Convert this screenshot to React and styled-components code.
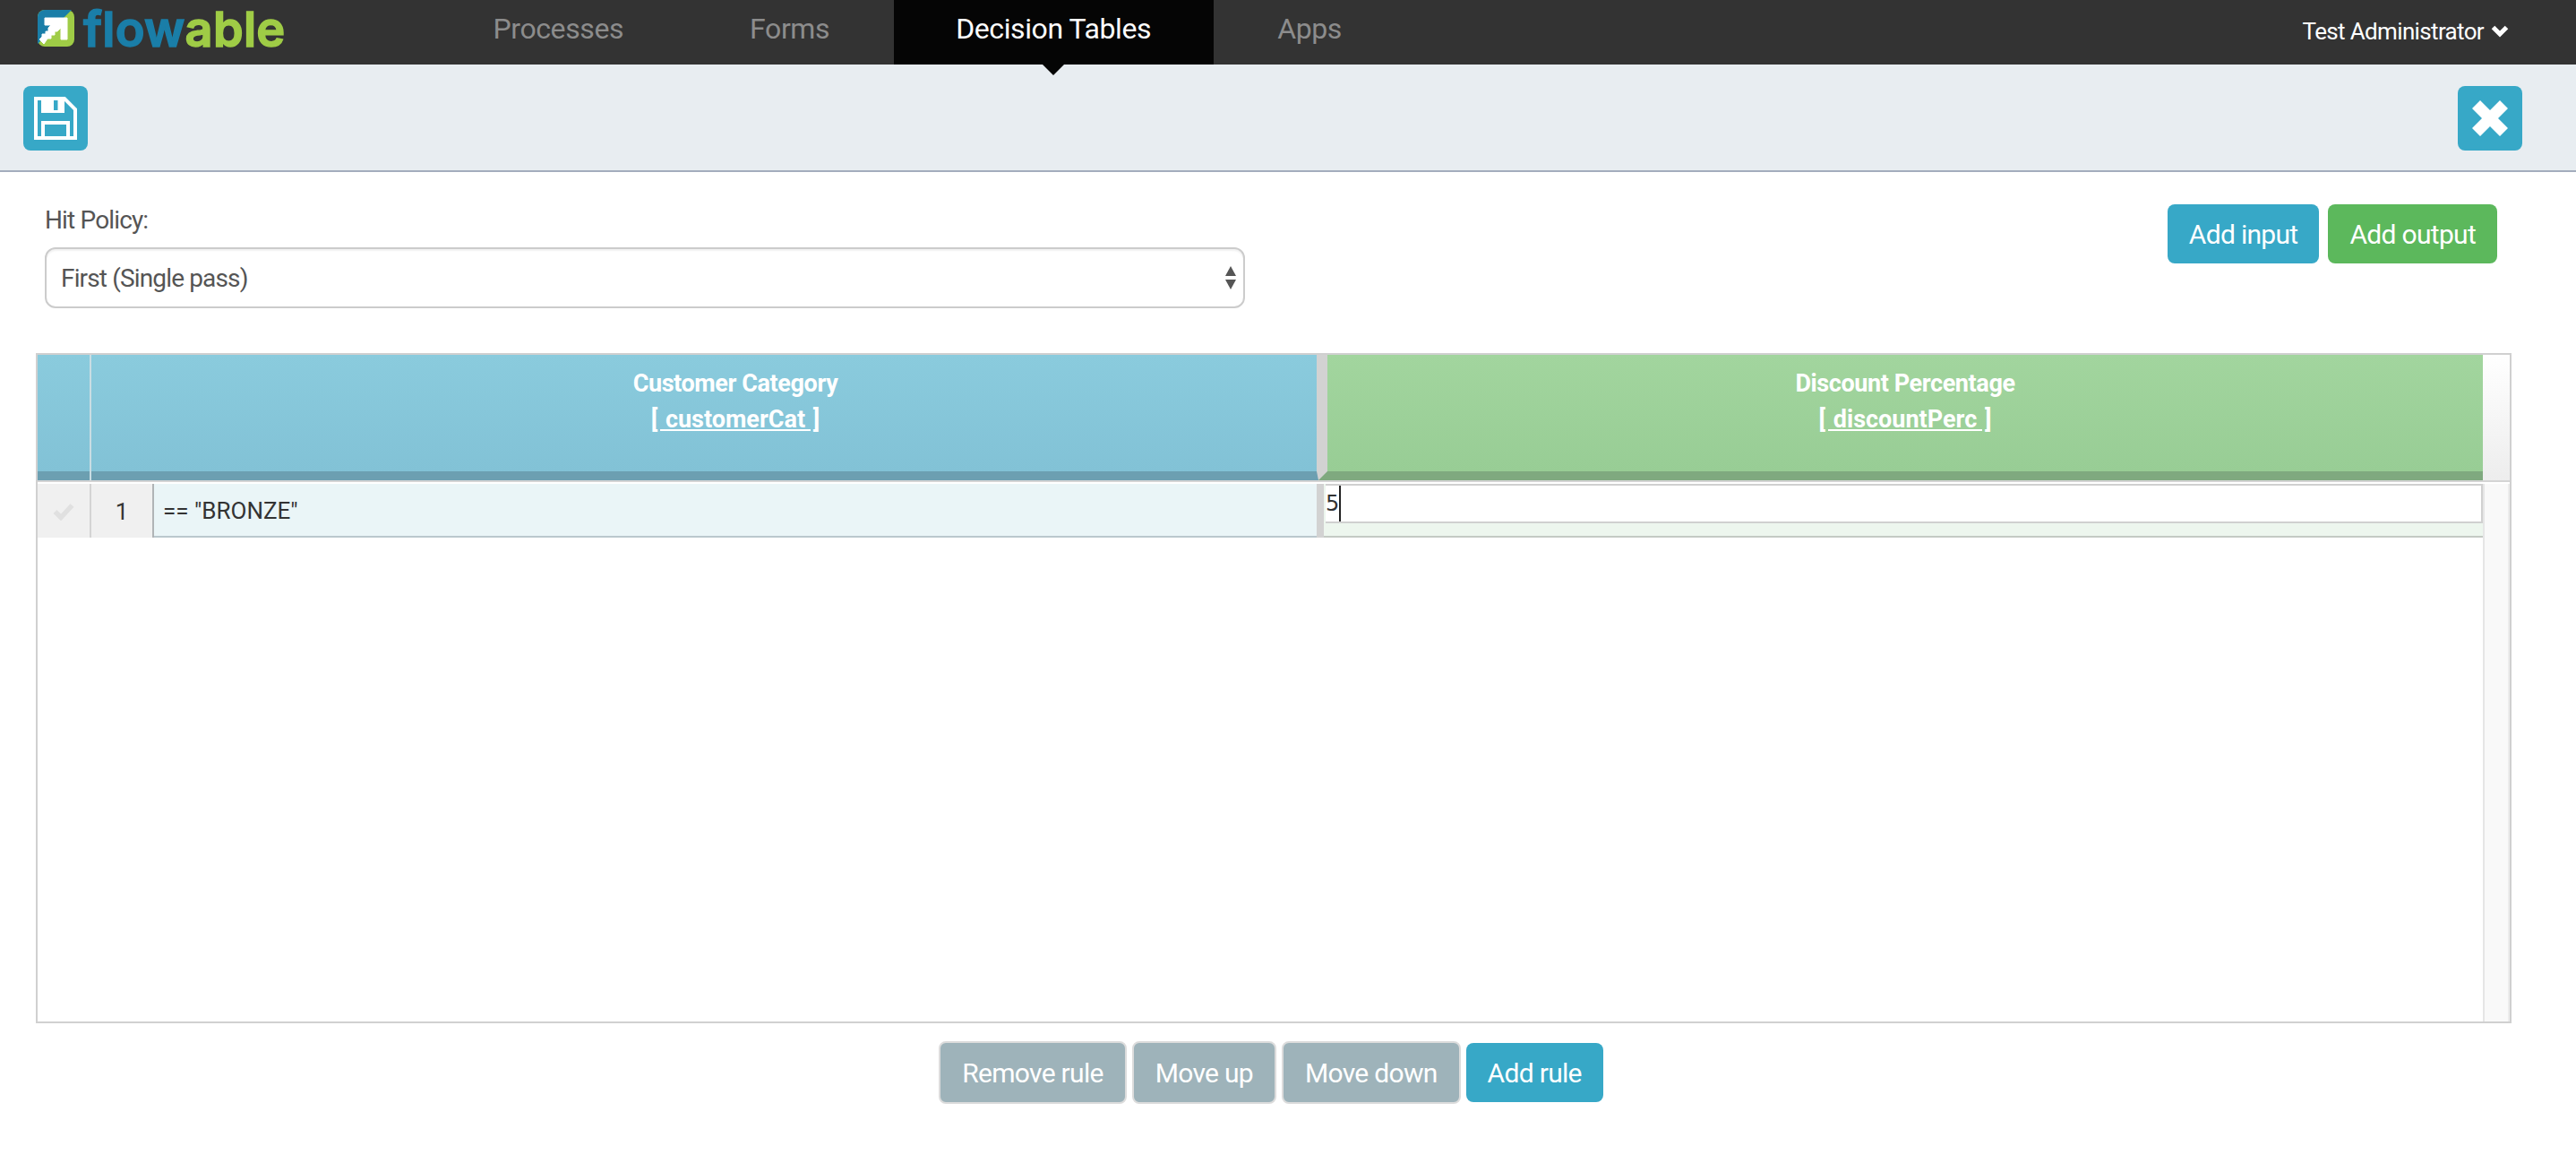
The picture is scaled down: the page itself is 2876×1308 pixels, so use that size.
import styled, { createGlobalStyle } from "styled-components";

const GlobalStyle = createGlobalStyle`
    html, body {
        margin: 0;
        padding: 0;
        background: #fff;
        overflow: hidden;
    }
    body {
        font-family: Roboto, "Liberation Sans", sans-serif;
        color: #333;
    }
    * { box-sizing: border-box; }
`

const Page = styled.div`
    width: 2876px;
    height: 1308px;
    display: flex;
    flex-direction: column;
`

const Navbar = styled.nav`
    height: 72px;
    flex: none;
    background: #333;
    display: flex;
    align-items: stretch;
`

const Brand = styled.div`
    width: 481px;
    padding: 11px 0 0 42px;
    display: flex;
    gap: 10px;
`

const Wordmark = styled.div`
    font-family: Inter, sans-serif;
    font-weight: 600;
    font-size: 54px;
    line-height: 41px;
    height: 41px;
    letter-spacing: 0.3px;
    -webkit-text-stroke: 1.5px currentColor;
    color: #1a7ea8;
    white-space: nowrap;
    padding-top: 1px;
    span { color: #9fcc46; }
`

const NavList = styled.ul`
    list-style: none;
    margin: 0;
    padding: 0;
    display: flex;
    gap: 2px;
`

const NavItem = styled.li`
    position: relative;
    padding: 0 69.5px;
    font-size: 32px;
    line-height: 64px;
    letter-spacing: -0.4px;
    color: ${props => props.$active ? "#fff" : "#8c8c8c"};
    background: ${props => props.$active ? "#050505" : "transparent"};
    ${props => props.$active && `
        &::after {
            content: "";
            position: absolute;
            left: 50%;
            top: 100%;
            margin-left: -12px;
            border-left: 12px solid transparent;
            border-right: 12px solid transparent;
            border-top: 12px solid #050505;
            z-index: 2;
        }
    `}
`

const UserMenu = styled.div`
    margin-left: auto;
    padding: 0 75px 3px 0;
    display: flex;
    align-items: center;
    gap: 8px;
    color: #fff;
    font-size: 26px;
    letter-spacing: -0.65px;
`

const Toolbar = styled.div`
    height: 120px;
    flex: none;
    background: #e8edf1;
    border-bottom: 2px solid #a4adbd;
    padding: 24px 60px 0 26px;
    display: flex;
    justify-content: space-between;
    align-items: flex-start;
`

const IconButton = styled.button`
    width: 72px;
    height: 72px;
    padding: 0;
    border: 0;
    border-radius: 8px;
    background: #37a8c7;
    display: grid;
    place-items: center;
`

const PolicyRow = styled.div`
    padding: 36px 88px 0 50px;
    display: flex;
    justify-content: space-between;
    align-items: flex-start;
`

const PolicyField = styled.div`
    width: 1340px;
    margin-top: -4px;
`

const FieldLabel = styled.label`
    display: block;
    margin-bottom: 8px;
    font-size: 28px;
    line-height: 44px;
    color: #555;
    letter-spacing: -0.85px;
`

const SelectWrap = styled.div`
    position: relative;
`

const Select = styled.select`
    display: block;
    width: 100%;
    height: 68px;
    padding: 0 16px;
    appearance: none;
    background: #fff;
    border: 2px solid #ccc;
    border-radius: 12px;
    box-shadow: inset 0 2px 2px rgba(0, 0, 0, 0.06);
    font-family: inherit;
    font-size: 28px;
    letter-spacing: -0.85px;
    color: #555;
`

const SelectArrows = styled.svg`
    position: absolute;
    right: 9px;
    top: 21px;
    pointer-events: none;
`

const ActionGroup = styled.div`
    display: flex;
    gap: 10px;
`

const ActionButton = styled.button`
    height: ${props => props.$muted ? "70px" : "66px"};
    padding: 0 24px;
    border: ${props => props.$muted ? "2px solid #dcdcdc" : "0"};
    border-radius: 8px;
    background: ${props => props.$variant === "green" ? "#5cb85c" : props.$muted ? "#9eb3ba" : "#37a8c7"};
    color: #fff;
    font-family: inherit;
    font-size: 30px;
    letter-spacing: -0.7px;
    white-space: nowrap;
`

const Table = styled.div`
    margin: 50px 0 0 40px;
    width: 2764px;
    height: 748px;
    flex: none;
    border: 2px solid #d0d0d0;
    display: flex;
    flex-direction: column;
`

const HeadRow = styled.div`
    height: 142px;
    flex: none;
    display: flex;
    border-bottom: 2px solid #d4d4d4;
`

const HeadCell = styled.div`
    position: relative;
    width: ${props => props.$width}px;
    flex: none;
    padding-left: ${props => props.$inset || 0}px;
    padding-top: 12px;
    border-bottom: 10px solid ${props => props.$kind === "input" ? "#6c9fb1" : "#7fa97f"};
    background: ${props => props.$kind === "input"
        ? "linear-gradient(#8acbdd, #82c2d6)"
        : "linear-gradient(#a2d59e, #98cd95)"};
    color: #fff;
    text-align: center;
    font-weight: 700;
    font-size: 27px;
    line-height: 40px;
    letter-spacing: -0.4px;
    ${props => props.$inset && `
        &::before {
            content: "";
            position: absolute;
            left: 58px;
            top: 0;
            bottom: -10px;
            width: 2px;
            background: #c9dde3;
        }
    `}
`

const VariableLink = styled.a`
    display: block;
    text-decoration: underline;
    letter-spacing: 0;
    word-spacing: 2px;
    color: #fff;
`

const HeadDivider = styled.div`
    position: relative;
    width: 12px;
    flex: none;
    background: #d2d2d2;
    &::before, &::after {
        content: "";
        position: absolute;
        left: 0;
        right: 0;
        bottom: 0;
        height: 10px;
    }
    &::before {
        background: #6c9fb1;
        clip-path: polygon(0 0, 2px 100%, 0 100%);
    }
    &::after {
        background: #7fa97f;
        clip-path: polygon(100% 0, 100% 100%, 2px 100%);
    }
`

const HeadCorner = styled.div`
    flex: 1;
    background: linear-gradient(#fff, #ededed);
`

const Body = styled.div`
    flex: 1;
    display: flex;
    padding-top: 2px;
`

const Rows = styled.div`
    width: 2730px;
    flex: none;
`

const Row = styled.div`
    height: 60px;
    display: flex;
`

const GutterCell = styled.div`
    width: ${props => props.$width}px;
    flex: none;
    display: grid;
    place-items: center;
    padding-top: 2px;
    background: #f0f0f0;
    border-right: 2px solid ${props => props.$dark ? "#b0b4b6" : "#d4d4d4"};
    font-size: 26px;
    color: #333;
`

const ExpressionCell = styled.div`
    width: 1298px;
    flex: none;
    padding: 0 0 0 10px;
    background: #eaf5f7;
    border-bottom: 2px solid #bac8cd;
    font-size: 26px;
    line-height: 61px;
    color: #333;
`

const CellDivider = styled.div`
    width: 8px;
    flex: none;
    background: #d2d2d2;
`

const OutputCell = styled.div`
    flex: 1;
    background: #edf6ee;
    border-bottom: 2px solid #c4cac4;
    display: flex;
    flex-direction: column;
`

const OutputInput = styled.div`
    height: 44px;
    margin-left: 2px;
    background: #fff;
    border: 2px solid #d0d0d0;
    border-left: 0;
    font-family: "DejaVu Sans", sans-serif;
    font-size: 24px;
    line-height: 40px;
    color: #333;
    display: flex;
`

const Caret = styled.span`
    width: 2px;
    height: 40px;
    background: #222;
`

const ScrollTrack = styled.div`
    flex: 1;
    background: #f9f9f9;
    border-left: 2px solid #e6e6e6;
    border-right: 2px solid #ececec;
`

const RuleActions = styled.div`
    margin: 20px 0 0 40px;
    width: 2758px;
    display: flex;
    justify-content: center;
    align-items: center;
    gap: 6px;
`

const LogoMark = () => (
    <svg width="41" height="41" viewBox="0 0 41 41" style={{ flex: "none" }}>
        <rect width="41" height="41" rx="8" fill="#9fcc46" />
        <path d="M8 0H38L0 38V8a8 8 0 0 1 8-8z" fill="#1a7ea8" />
        <path d="M8 9H33V33H26V20L22 24H19V28H15V32H11L7 38L2 33L5 30V27H9V24H12V20L15 17H8z" fill="#fff" stroke="#fff" strokeWidth="1" strokeLinejoin="round" />
    </svg>
)

const SaveIcon = () => (
    <svg width="48" height="48" viewBox="0 0 48 48" fill="none">
        <path d="M2 2H34L46 14V46H2z" stroke="#fff" strokeWidth="4" />
        <path d="M8 2H34V18H8z" fill="#fff" />
        <rect x="22" y="4" width="4.5" height="11" fill="#37a8c7" />
        <rect x="10" y="29" width="28" height="17" stroke="#fff" strokeWidth="4" />
    </svg>
)

const CloseIcon = () => (
    <svg width="40" height="40" viewBox="0 0 40 40">
        <path d="M9 0L20 11L31 0L40 9L29 20L40 31L31 40L20 29L9 40L0 31L11 20L0 9z" fill="#fff" />
    </svg>
)

const ChevronIcon = () => (
    <svg width="20" height="15" viewBox="0 0 20 15" fill="none">
        <path d="M2.5 3.5L10 11L17.5 3.5" stroke="#fff" strokeWidth="5" />
    </svg>
)

const CheckIcon = () => (
    <svg width="24" height="20" viewBox="0 0 24 20" fill="none">
        <path d="M2.5 10L9 16.5L21.5 3" stroke="#e0e0e0" strokeWidth="5.5" />
    </svg>
)

export default function App() {
    return (
        <Page>
            <GlobalStyle />
            <Navbar>
                <Brand>
                    <LogoMark />
                    <Wordmark>flow<span>able</span></Wordmark>
                </Brand>
                <NavList>
                    <NavItem>Processes</NavItem>
                    <NavItem>Forms</NavItem>
                    <NavItem $active>Decision Tables</NavItem>
                    <NavItem>Apps</NavItem>
                </NavList>
                <UserMenu>Test Administrator <ChevronIcon /></UserMenu>
            </Navbar>
            <Toolbar>
                <IconButton aria-label="Save"><SaveIcon /></IconButton>
                <IconButton aria-label="Close"><CloseIcon /></IconButton>
            </Toolbar>
            <PolicyRow>
                <PolicyField>
                    <FieldLabel>Hit Policy:</FieldLabel>
                    <SelectWrap>
                        <Select defaultValue="first">
                            <option value="first">First (Single pass)</option>
                            <option value="any">Any (Single pass)</option>
                        </Select>
                        <SelectArrows width="14" height="26" viewBox="0 0 14 26">
                            <path d="M7 0L13 11H1z" fill="#555" />
                            <path d="M7 26L13 15H1z" fill="#555" />
                        </SelectArrows>
                    </SelectWrap>
                </PolicyField>
                <ActionGroup>
                    <ActionButton>Add input</ActionButton>
                    <ActionButton $variant="green">Add output</ActionButton>
                </ActionGroup>
            </PolicyRow>
            <Table>
                <HeadRow>
                    <HeadCell $kind="input" $width={1428} $inset={130}>
                        Customer Category
                        <VariableLink>[ customerCat ]</VariableLink>
                    </HeadCell>
                    <HeadDivider />
                    <HeadCell $kind="output" $width={1290}>
                        Discount Percentage
                        <VariableLink>[ discountPerc ]</VariableLink>
                    </HeadCell>
                    <HeadCorner />
                </HeadRow>
                <Body>
                    <Rows>
                        <Row>
                            <GutterCell $width={60}><CheckIcon /></GutterCell>
                            <GutterCell $width={70} $dark>1</GutterCell>
                            <ExpressionCell>== "BRONZE"</ExpressionCell>
                            <CellDivider />
                            <OutputCell>
                                <OutputInput>5<Caret /></OutputInput>
                            </OutputCell>
                        </Row>
                    </Rows>
                    <ScrollTrack />
                </Body>
            </Table>
            <RuleActions>
                <ActionButton $muted>Remove rule</ActionButton>
                <ActionButton $muted>Move up</ActionButton>
                <ActionButton $muted>Move down</ActionButton>
                <ActionButton>Add rule</ActionButton>
            </RuleActions>
        </Page>
    );
}
